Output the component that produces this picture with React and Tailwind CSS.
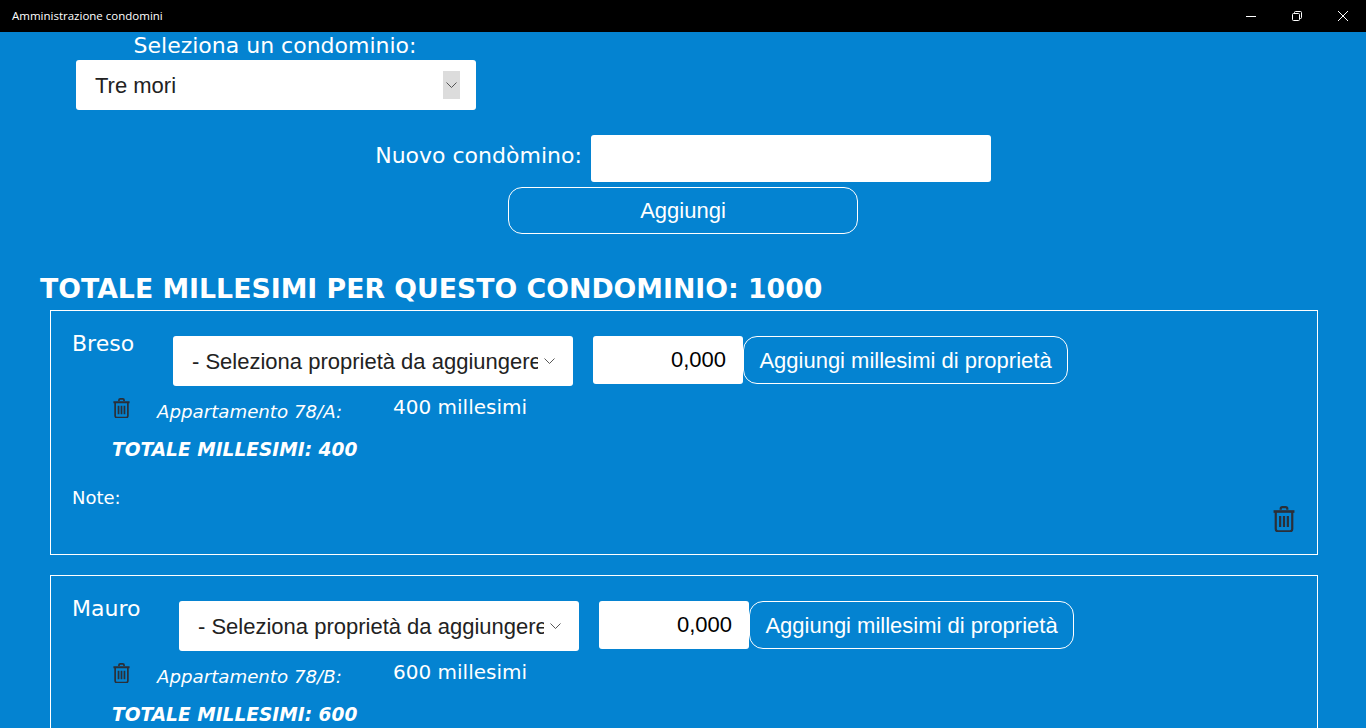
import React from 'react';

const verdana = "font-['DejaVu_Sans','Liberation_Sans',sans-serif]";
const arial = "font-['Liberation_Sans',Arial,sans-serif]";

const Chevron = ({className = ""}) => (
    <svg className={className} width="11" height="6" viewBox="0 0 11 6" fill="none" stroke="#444" strokeWidth="0.9">
        <path d="M0.5 0.5l5 5 5-5"/>
    </svg>
);

const Trash = ({size = 17}) => (
    <svg width={size} height={size * 1.2} viewBox="0 0 20 24" fill="none" stroke="#2b2f38" strokeWidth="2">
        <path d="M7 3.5V2.5a1.5 1.5 0 0 1 1.5-1.5h3A1.5 1.5 0 0 1 13 2.5v1"/>
        <path d="M0.5 5h19" strokeWidth="2.4"/>
        <path d="M2.5 5v16a2 2 0 0 0 2 2h11a2 2 0 0 0 2-2V5"/>
        <path d="M6.5 9v10M10 9v10M13.5 9v10"/>
    </svg>
);

const PropertySelect = () => (
    <div className={`${arial} w-[400px] h-[50px] bg-white rounded-[3px] flex items-center pl-[19px] text-[22px] text-[#222]`}>
        <span className="w-[346px] overflow-hidden whitespace-nowrap">- Seleziona proprietà da aggiungere</span>
        <Chevron className="ml-[6px] shrink-0"/>
    </div>
);

const Owner = ({name, gap, unit, millesimi}) => (
    <div className="border border-white px-[21px] pt-[25px] h-[245px] mb-[20px]">
        <div className="flex items-start">
            <div className={`${verdana} text-[22px] leading-[14px] mt-[1px] text-white`} style={{width: gap}}>{name}</div>
            <PropertySelect/>
            <input
                readOnly
                value="0,000"
                className={`${arial} w-[150px] h-[48px] ml-[20px] bg-white text-right pr-[17px] text-[22px] text-black rounded-[3px] outline-none`}
            />
            <button className={`${arial} w-[325px] h-[48px] border border-white rounded-[14px] text-[22px] text-white`}>
                Aggiungi millesimi di proprietà
            </button>
        </div>
        <div className="flex items-start mt-[10px] ml-[39px] h-[34px]">
            <div className="w-[46px] pl-[2px] pt-[2px]"><Trash/></div>
            <div className={`${verdana} w-[236px] pt-[2px] italic text-[18.2px] text-white whitespace-nowrap`}>Appartamento {unit}:</div>
            <div className={`${verdana} text-[20px] leading-[22px] text-white whitespace-nowrap`}>{millesimi} millesimi</div>
        </div>
        <div className={`${verdana} ml-[40px] mt-[6px] font-bold italic text-[18.6px] text-white`}>TOTALE MILLESIMI: {millesimi}</div>
        <div className="flex justify-between items-start mt-[20px]">
            <div className={`${verdana} text-[18px] text-white`}>Note:</div>
            <div className="mt-[22px] mr-[1px]"><Trash size={22}/></div>
        </div>
    </div>
);

export default function App() {
    return (
        <div className="w-[1366px] h-[728px] overflow-hidden bg-[#0483d1]">
            <div className="h-[32px] bg-black flex items-center justify-between text-white">
                <span className="pl-[12px] text-[11.5px] font-['Open_Sans',sans-serif]">Amministrazione condomini</span>
                <div className="flex items-center">
                    <div className="w-[46px] flex justify-center">
                        <svg width="10" height="10" viewBox="0 0 10 10" stroke="#fff" fill="none"><path d="M0 5.5h10"/></svg>
                    </div>
                    <div className="w-[46px] flex justify-center">
                        <svg width="10" height="10" viewBox="0 0 10 10" stroke="#fff" fill="none">
                            <rect x="0.5" y="2.5" width="7" height="7" rx="1"/>
                            <path d="M2.5 2.5v-1a1 1 0 0 1 1-1h5a1 1 0 0 1 1 1v5a1 1 0 0 1-1 1h-1"/>
                        </svg>
                    </div>
                    <div className="w-[46px] flex justify-center">
                        <svg width="10" height="10" viewBox="0 0 10 10" stroke="#fff" fill="none"><path d="M0 0l10 10M10 0L0 10"/></svg>
                    </div>
                </div>
            </div>

            <div className="ml-[76px] w-[400px]">
                <div className={`${verdana} text-center pr-[2px] text-[22px] leading-[28px] text-white`}>Seleziona un condominio:</div>
                <div className={`${arial} h-[50px] bg-white rounded-[3px] flex items-center justify-between pl-[19px] pr-[16px] text-[22px] text-[#222]`}>
                    <span>Tre mori</span>
                    <div className="w-[17px] h-[28px] bg-[#dcdcdc] flex items-center justify-center"><Chevron/></div>
                </div>
            </div>

            <div className="mt-[25px] flex justify-center items-center">
                <label className={`${verdana} text-[22px] text-white mr-[9px] mb-[6px]`}>Nuovo condòmino:</label>
                <input readOnly className="w-[400px] h-[47px] bg-white rounded-[3px] outline-none"/>
            </div>
            <div className="mt-[5px] flex justify-center">
                <button className={`${arial} w-[350px] h-[47px] border border-white rounded-[14px] text-[22px] text-white`}>Aggiungi</button>
            </div>

            <h1 className={`${verdana} ml-[40px] mt-[37px] mb-[3px] text-[26.75px] leading-[36px] font-bold text-white whitespace-nowrap`}>TOTALE MILLESIMI PER QUESTO CONDOMINIO: 1000</h1>

            <div className="ml-[50px] w-[1268px]">
                <Owner name="Breso" gap={101} unit="78/A" millesimi={400}/>
                <Owner name="Mauro" gap={107} unit="78/B" millesimi={600}/>
            </div>
        </div>
    );
}
